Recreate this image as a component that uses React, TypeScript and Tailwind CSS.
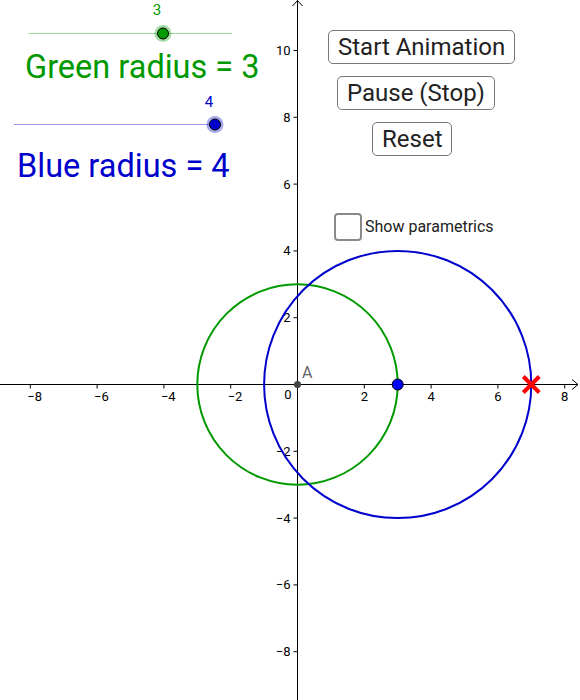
import React from "react";

const S = 33.4;
const OX = 297.5;
const OY = 384.5;
const X = (v: number) => OX + v * S;
const Y = (v: number) => OY - v * S;

function fmt(n: number) {
  return n < 0 ? "\u2212" + Math.abs(n) : String(n);
}

function Graph() {
  const xt = [-8, -6, -4, -2, 2, 4, 6, 8];
  const yt = [-8, -6, -4, -2, 2, 4, 6, 8, 10];
  return (
    <svg width="580" height="700" viewBox="0 0 580 700" className="absolute left-0 top-0">
      {/* sliders */}
      <line x1="29" y1="33.5" x2="232" y2="33.5" stroke="#99d699" strokeWidth="1" />
      <circle cx="163" cy="33.5" r="8.5" fill="#009900" opacity="0.35" />
      <circle cx="163" cy="33.5" r="5.5" fill="#009900" stroke="#000" strokeWidth="1" />
      <line x1="14" y1="124.5" x2="215" y2="124.5" stroke="#9999e6" strokeWidth="1" />
      <circle cx="215" cy="124.5" r="8.5" fill="#0000cc" opacity="0.35" />
      <circle cx="215" cy="124.5" r="5.5" fill="#0000cc" stroke="#000" strokeWidth="1" />

      {/* axes */}
      <line x1="0" y1={OY} x2="578" y2={OY} stroke="#000" strokeWidth="1" />
      <polyline points={`572,${OY - 5} 578,${OY} 572,${OY + 5}`} fill="none" stroke="#000" strokeWidth="1" />
      <line x1={OX} y1="0" x2={OX} y2="700" stroke="#000" strokeWidth="1" />
      <polyline points={`${OX - 5},6 ${OX},0.5 ${OX + 5},6`} fill="none" stroke="#000" strokeWidth="1" />
      {xt.map((v) => (
        <g key={"x" + v}>
          <line x1={X(v)} y1={OY} x2={X(v)} y2={OY + 4} stroke="#000" strokeWidth="1" />
          <text
            x={v < 0 ? X(v) - 3 : X(v)}
            y="401"
            fontSize="13"
            fontFamily="Roboto, sans-serif"
            textAnchor={v < 0 ? "start" : "middle"}
            fill="#000"
          >
            {fmt(v)}
          </text>
        </g>
      ))}
      <text x="288" y="399" fontSize="13" fontFamily="Roboto, sans-serif" textAnchor="middle" fill="#000">
        0
      </text>
      {yt.map((v) => (
        <g key={"y" + v}>
          <line x1={OX - 4} y1={Y(v)} x2={OX} y2={Y(v)} stroke="#000" strokeWidth="1" />
          <text
            x="290.5"
            y={Y(v) + 4.5}
            fontSize="13"
            fontFamily="Roboto, sans-serif"
            textAnchor="end"
            fill="#000"
          >
            {fmt(v)}
          </text>
        </g>
      ))}

      {/* circles */}
      <circle cx={OX} cy={OY} r={3 * S} fill="none" stroke="#009900" strokeWidth="2" />
      <circle cx={X(3)} cy={OY} r={4 * S} fill="none" stroke="#0000cc" strokeWidth="2" />

      {/* points */}
      <circle cx={OX} cy={OY} r="3.5" fill="#444" />
      <text x="302" y="378" fontSize="16" fontFamily="Roboto, sans-serif" fill="#666">
        A
      </text>
      <circle cx={X(3)} cy={OY} r="5.5" fill="#0000ff" stroke="#000" strokeWidth="1" />
      <line x1={X(7) - 8} y1={OY - 8} x2={X(7) + 8} y2={OY + 8} stroke="#ff0000" strokeWidth="4" />
      <line x1={X(7) - 8} y1={OY + 8} x2={X(7) + 8} y2={OY - 8} stroke="#ff0000" strokeWidth="4" />
    </svg>
  );
}

const btn =
  "h-[34px] px-[9px] border border-[#777] rounded-[5px] bg-white text-[24px] leading-none text-[#222] whitespace-nowrap";

export default function App() {
  return (
    <div
      className="relative w-[580px] h-[700px] bg-white overflow-hidden"
      style={{ fontFamily: "Roboto, 'Liberation Sans', sans-serif" }}
    >
      <Graph />

      {/* slider values */}
      <div className="absolute left-[151px] top-[3px] text-[15px] leading-none text-[#009900] w-[12px] text-center">3</div>
      <div className="absolute left-[203px] top-[95px] text-[15px] leading-none text-[#0000cc] w-[12px] text-center">4</div>

      {/* big labels */}
      <div className="absolute left-[25px] top-[51px] text-[32.5px] leading-none text-[#009900] whitespace-nowrap">
        Green radius = 3
      </div>
      <div className="absolute left-[17px] top-[150px] text-[32.5px] leading-none text-[#0000cc] whitespace-nowrap">
        Blue radius = 4
      </div>

      {/* buttons */}
      <div className="absolute left-[328px] top-[30px] flex flex-col items-start gap-[12px]">
        <button className={btn}>Start Animation</button>
        <button className={btn + " ml-[9px]"}>Pause (Stop)</button>
        <button className={btn + " ml-[44px]"}>Reset</button>
      </div>

      {/* checkbox */}
      <div className="absolute left-[334px] top-[213px] flex items-center gap-[3px]">
        <div className="w-[28px] h-[28px] border-2 border-[#8a8a8a] rounded-[4px] bg-white" />
        <span className="text-[16px] leading-none text-[#222] whitespace-nowrap">Show parametrics</span>
      </div>
    </div>
  );
}
